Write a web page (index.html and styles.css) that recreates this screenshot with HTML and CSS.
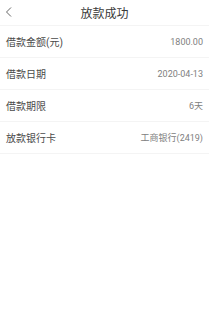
FILE: index.html
```html
<!DOCTYPE html>
<html lang="zh-CN">
<head>
    <meta charset="UTF-8">
    <meta name="viewport" content="width=device-width, initial-scale=1.0">
    <title>放款成功</title>
    <link rel="stylesheet" href="styles.css">
</head>
<body>
    <div class="header">
        <span class="back">
            <svg width="8" height="12" viewBox="0 0 8 12"><path d="M6 1.5 L1.5 6 L6 10.5" fill="none" stroke="#666" stroke-width="1"/></svg>
        </span>
        <h1>放款成功</h1>
    </div>
    <div class="list">
        <div class="row"><span class="label">借款金额(元)</span><span class="value">1800.00</span></div>
        <div class="row"><span class="label">借款日期</span><span class="value">2020-04-13</span></div>
        <div class="row"><span class="label">借款期限</span><span class="value">6天</span></div>
        <div class="row"><span class="label">放款银行卡</span><span class="value">工商银行(2419)</span></div>
    </div>
</body>
</html>
```

FILE: styles.css
```css
body {
    margin: 0;
    font-family: Roboto, "Noto Sans CJK SC", sans-serif;
    background: #fff;
    color: #333;
}

.header {
    position: relative;
    height: 25px;
    display: flex;
    justify-content: center;
    align-items: center;
    border-bottom: 1px solid #f4f4f4;
}

.back {
    position: absolute;
    left: 5px;
    top: 6px;
    display: flex;
}

h1 {
    margin: 0;
    font-size: 12px;
    font-weight: normal;
    color: #3a3a3a;
}

.row {
    height: 31px;
    display: flex;
    justify-content: space-between;
    align-items: center;
    padding: 0 6px;
    border-bottom: 1px solid #f4f4f4;
}

.label {
    font-size: 10px;
    color: #4a4a4a;
}

.value {
    font-size: 9px;
    color: #808080;
}
```
